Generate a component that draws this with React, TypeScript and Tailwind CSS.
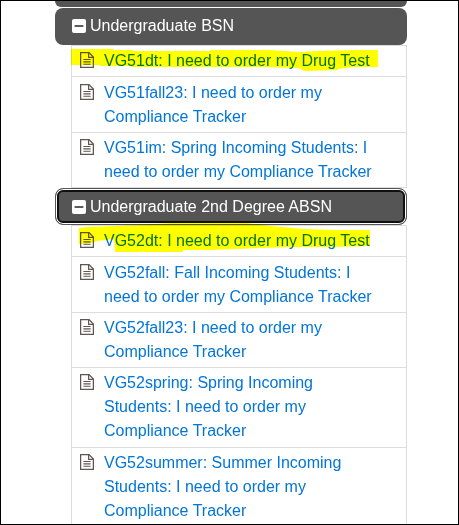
import React from "react";

type Group = { title: string; focused: boolean; items: string[][] };

const groups: Group[] = [
  {
    title: "Undergraduate BSN",
    focused: false,
    items: [
      ["VG51dt: I need to order my Drug Test"],
      ["VG51fall23: I need to order my", "Compliance Tracker"],
      ["VG51im: Spring Incoming Students: I", "need to order my Compliance Tracker"],
    ],
  },
  {
    title: "Undergraduate 2nd Degree ABSN",
    focused: true,
    items: [
      ["VG52dt: I need to order my Drug Test"],
      ["VG52fall: Fall Incoming Students: I", "need to order my Compliance Tracker"],
      ["VG52fall23: I need to order my", "Compliance Tracker"],
      ["VG52spring: Spring Incoming", "Students: I need to order my", "Compliance Tracker"],
      ["VG52summer: Summer Incoming", "Students: I need to order my", "Compliance Tracker"],
    ],
  },
];

// Marker strokes laid over the first row of each group
const strokes = [
  "M0 4H42V5H62V6H139V5H186L198 5L228 7L248 6L285 5H307V22H283L267 24V25L234 26L227 23L190 22H60V21H29V20H0Z",
  "M8 3L16 2L44 1L70 0L100 -2H176L200 1L232 4L262 5H299V21L262 22H222L190 23L140 25H112V27H72V26H71V27H44L43 14L26 16L20 18L8 19Z",
];

function FileIcon() {
  return (
    <svg className="mt-[3px] h-4 w-[14px] shrink-0" viewBox="0 0 14 16" fill="none" stroke="#5f5652">
      <path d="M.6.6H9L13.4 5V15.4H.6Z" strokeWidth="1.3" />
      <path d="M8.6 .6V5.4H13.4" strokeWidth="1.2" />
      <path d="M3.4 7.5H10.6M3.4 9.9H10.6M3.4 12.3H10.6" strokeWidth="1.1" />
    </svg>
  );
}

function MinusIcon() {
  return (
    <svg className="mr-1 h-[14px] w-[14px] shrink-0" viewBox="0 0 14 14">
      <rect width="14" height="14" rx="2" fill="#fff" />
      <path d="M2.6 7H11.4" stroke="#555" strokeWidth="1.9" />
    </svg>
  );
}

export default function App() {
  return (
    <div className="h-[525px] w-[459px] overflow-hidden border border-black bg-white font-['Liberation_Sans',Arial,sans-serif] text-base leading-6">
      <div className="ml-[54px] w-[352px]">
        <div className="mb-px h-[5.8px] rounded-b-lg bg-[#555]" />
        {groups.map((g, i) => (
          <section key={g.title}>
            <h2
              className={
                g.focused
                  ? "flex h-[36.95px] items-center rounded-lg border border-[#555] bg-[#555] pl-4 text-white shadow-[inset_0_0_0_1px_#fff,inset_0_0_0_3px_#101010]"
                  : "flex h-[37.2px] items-center rounded-lg bg-[#555] pl-[17px] text-white"
              }
            >
              <MinusIcon />
              {g.title}
            </h2>
            <ul className="relative ml-4 border-b border-[#ddd]">
              {g.items.map((lines) => (
                <li key={lines[0]} className="flex border-x border-t border-[#ddd] py-[3.2px] pl-2 text-[#0275d8]">
                  <FileIcon />
                  <a className="ml-[10px] whitespace-nowrap">
                    {lines.map((line) => (
                      <span key={line} className="block">{line}</span>
                    ))}
                  </a>
                </li>
              ))}
              <svg className="absolute left-0 top-0 h-8 w-[336px] overflow-visible mix-blend-multiply" viewBox="0 0 336 32">
                <path d={strokes[i]} fill="#ff0" />
              </svg>
            </ul>
          </section>
        ))}
      </div>
    </div>
  );
}
